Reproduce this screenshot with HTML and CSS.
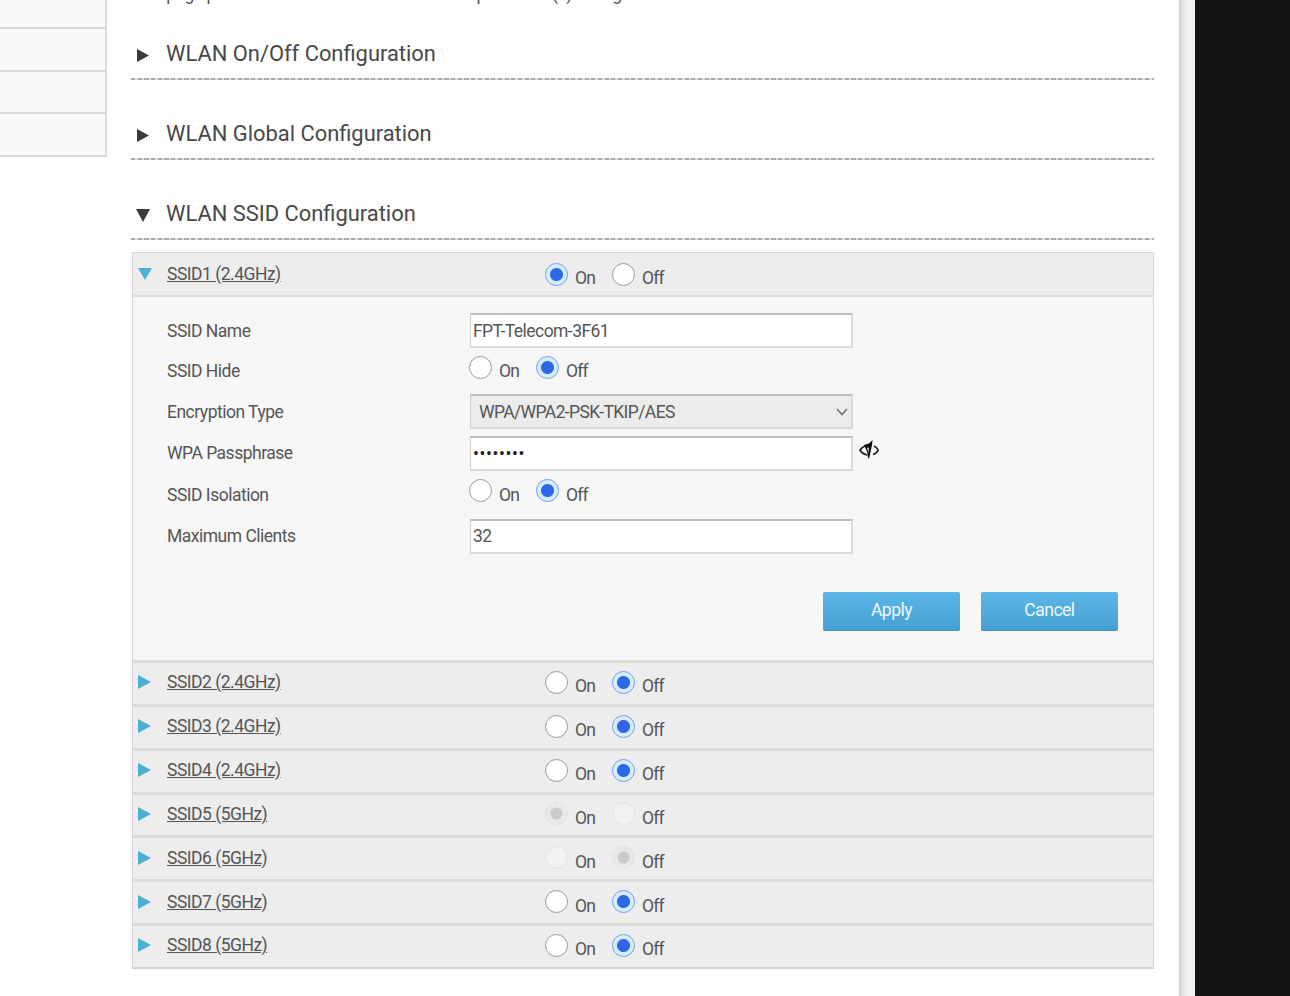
FILE: index.html
```html
<!DOCTYPE html>
<html lang="en">
<head>
    <meta charset="UTF-8">
    <meta name="viewport" content="width=device-width, initial-scale=1.0">
    <title>WLAN Basic</title>
    <link rel="stylesheet" href="styles.css">
</head>
<body>
    <div class="page">
        <!-- Side menu -->
        <ul class="side-menu">
            <li></li>
            <li></li>
            <li></li>
            <li></li>
        </ul>

        <div class="content">
            <p class="intro">This page provides the function of WLAN basic parameter(s) configuration.</p>

            <h2 class="section"><svg class="arrow" viewBox="0 0 14 14"><path d="M1 1L13 7.5L1 14Z"/></svg>WLAN On/Off Configuration</h2>
            <h2 class="section"><svg class="arrow" viewBox="0 0 14 14"><path d="M1 1L13 7.5L1 14Z"/></svg>WLAN Global Configuration</h2>
            <h2 class="section"><svg class="arrow" viewBox="0 0 14 14"><path d="M0 1H14L7 14Z"/></svg>WLAN SSID Configuration</h2>

            <div class="ssid-list">
                <div class="ssid-row first">
                    <svg class="arrow" viewBox="0 0 14 14"><path d="M0 1H14L7 13Z"/></svg>
                    <a class="ssid-link">SSID1 (2.4GHz)</a>
                    <div class="switch">
                        <label><input type="radio" name="ssid1" checked><span>On</span></label>
                        <label><input type="radio" name="ssid1"><span>Off</span></label>
                    </div>
                </div>

                <!-- SSID1 settings -->
                <form class="ssid-form">
                    <div class="fields">
                        <label for="ssid-name">SSID Name</label>
                        <input class="field" type="text" id="ssid-name" value="FPT-Telecom-3F61">

                        <span>SSID Hide</span>
                        <div class="switch">
                            <label><input type="radio" name="hide"><span>On</span></label>
                            <label><input type="radio" name="hide" checked><span>Off</span></label>
                        </div>

                        <label for="encryption">Encryption Type</label>
                        <div class="select-box">
                            <select class="field" id="encryption">
                                <option>WPA/WPA2-PSK-TKIP/AES</option>
                            </select>
                            <svg class="chevron" viewBox="0 0 14 10"><path d="M2 2L7 7.5L12 2"/></svg>
                        </div>

                        <label for="passphrase">WPA Passphrase</label>
                        <div class="pass-box">
                            <input class="field pass" type="text" id="passphrase" value="••••••••">
                            <svg class="eye" viewBox="0 0 20 20">
                                <path class="line" d="M7 5.5C4 6.5 2 8.5 1 10C2 12 4.500 14 8 15M15 6C17 7 18.500 8.500 19 10C18.500 12 17 13.500 14 14.500"/>
                                <path d="M5 5L10 3.500L13.500 0L13 5L10 19L8.500 16L8.500 13L6 7Z"/>
                                <path class="shine" d="M8 8L10 7.500L9.500 13Z"/>
                            </svg>
                        </div>

                        <span>SSID Isolation</span>
                        <div class="switch">
                            <label><input type="radio" name="isolation"><span>On</span></label>
                            <label><input type="radio" name="isolation" checked><span>Off</span></label>
                        </div>

                        <label for="clients">Maximum Clients</label>
                        <input class="field" type="text" id="clients" value="32">
                    </div>
                    <div class="buttons">
                        <button type="button">Apply</button>
                        <button type="button">Cancel</button>
                    </div>
                </form>

                <div class="ssid-row">
                    <svg class="arrow" viewBox="0 0 14 14"><path d="M0 0L13 7L0 14Z"/></svg>
                    <a class="ssid-link">SSID2 (2.4GHz)</a>
                    <div class="switch">
                        <label><input type="radio" name="ssid2"><span>On</span></label>
                        <label><input type="radio" name="ssid2" checked><span>Off</span></label>
                    </div>
                </div>
                <div class="ssid-row">
                    <svg class="arrow" viewBox="0 0 14 14"><path d="M0 0L13 7L0 14Z"/></svg>
                    <a class="ssid-link">SSID3 (2.4GHz)</a>
                    <div class="switch">
                        <label><input type="radio" name="ssid3"><span>On</span></label>
                        <label><input type="radio" name="ssid3" checked><span>Off</span></label>
                    </div>
                </div>
                <div class="ssid-row">
                    <svg class="arrow" viewBox="0 0 14 14"><path d="M0 0L13 7L0 14Z"/></svg>
                    <a class="ssid-link">SSID4 (2.4GHz)</a>
                    <div class="switch">
                        <label><input type="radio" name="ssid4"><span>On</span></label>
                        <label><input type="radio" name="ssid4" checked><span>Off</span></label>
                    </div>
                </div>
                <div class="ssid-row">
                    <svg class="arrow" viewBox="0 0 14 14"><path d="M0 0L13 7L0 14Z"/></svg>
                    <a class="ssid-link">SSID5 (5GHz)</a>
                    <div class="switch">
                        <label><input type="radio" name="ssid5" checked disabled><span>On</span></label>
                        <label><input type="radio" name="ssid5" disabled><span>Off</span></label>
                    </div>
                </div>
                <div class="ssid-row">
                    <svg class="arrow" viewBox="0 0 14 14"><path d="M0 0L13 7L0 14Z"/></svg>
                    <a class="ssid-link">SSID6 (5GHz)</a>
                    <div class="switch">
                        <label><input type="radio" name="ssid6" disabled><span>On</span></label>
                        <label><input type="radio" name="ssid6" checked disabled><span>Off</span></label>
                    </div>
                </div>
                <div class="ssid-row">
                    <svg class="arrow" viewBox="0 0 14 14"><path d="M0 0L13 7L0 14Z"/></svg>
                    <a class="ssid-link">SSID7 (5GHz)</a>
                    <div class="switch">
                        <label><input type="radio" name="ssid7"><span>On</span></label>
                        <label><input type="radio" name="ssid7" checked><span>Off</span></label>
                    </div>
                </div>
                <div class="ssid-row">
                    <svg class="arrow" viewBox="0 0 14 14"><path d="M0 0L13 7L0 14Z"/></svg>
                    <a class="ssid-link">SSID8 (5GHz)</a>
                    <div class="switch">
                        <label><input type="radio" name="ssid8"><span>On</span></label>
                        <label><input type="radio" name="ssid8" checked><span>Off</span></label>
                    </div>
                </div>
            </div>
        </div>
        <div class="page-edge"></div>
    </div>
</body>
</html>
```
FILE: styles.css
```css
* {
    box-sizing: border-box;
}

body {
    margin: 0;
    height: 996px;
    overflow: hidden;
    background: #141414;
    font-family: Roboto, sans-serif;
    font-size: 17.5px;
    letter-spacing: -0.5px;
    color: #555;
}

.page {
    display: flex;
    width: 1195px;
    height: 996px;
    overflow: hidden;
    background: #fefefe;
}

.side-menu {
    width: 107px;
    margin: 0;
    padding: 0;
    list-style: none;
}

.side-menu li {
    height: 42.7px;
    background: #fafafa;
    border-right: 2px solid #dcdcdc;
    border-bottom: 2px solid #d8d8d8;
}

.side-menu li:first-child {
    height: 29px;
}

.content {
    width: 1023px;
    margin-left: 24px;
}

.intro {
    height: 16px;
    margin: -16px 0 0;
    line-height: 20px;
    white-space: nowrap;
}

.section {
    display: flex;
    align-items: center;
    height: 80px;
    margin: 0;
    padding: 27px 0 0 5px;
    background: repeating-linear-gradient(to right, #aaa 0 4.2px, #dedede 4.2px 6.67px) bottom / 100% 2px no-repeat;
    font-size: 21.9px;
    font-weight: 400;
    letter-spacing: 0;
    color: #484848;
}

.arrow {
    flex: none;
    width: 14px;
    height: 14px;
}

.section .arrow {
    margin: 3px 16px 0 0;
    fill: #3c3c3c;
}

.ssid-list {
    margin: 12px 0 0 1px;
    border: 1px solid #d6d6d6;
    border-bottom: 2px solid #d2d2d2;
}

.ssid-row {
    display: flex;
    align-items: center;
    height: 43.85px;
    padding: 0 0 2px 5px;
    border-top: 3px solid #dbdbdb;
    background: #ededed;
}

.ssid-row.first {
    height: 44px;
    padding-bottom: 0;
    border-top: 0;
    border-bottom: 2px solid #dcdcdc;
}

.ssid-row .arrow {
    margin-right: 15px;
    fill: #4dafd7;
}

.ssid-link {
    width: 378px;
    text-decoration: underline;
}

.switch,
.switch label {
    display: flex;
    align-items: center;
}

.switch label {
    width: 67px;
}

.switch span {
    margin: 8px 0 0 7px;
    letter-spacing: -0.8px;
}

input[type="radio"] {
    appearance: none;
    flex: none;
    width: 23px;
    height: 23px;
    margin: 0;
    border: 1.5px solid #999;
    border-radius: 50%;
    background: #fff;
}

input[type="radio"]:checked {
    border-color: #6a9ff0;
    background: radial-gradient(circle, #2c67e5 6px, #d9ecff 7px);
}

input[type="radio"]:disabled {
    border-color: #e2e2e2;
    background: #f2f2f2;
}

input[type="radio"]:disabled:checked {
    background: radial-gradient(circle, #cacaca 5.5px, #e8e8e8 6.5px);
}

/* Settings form */
.ssid-form {
    height: 363px;
    padding: 13px 35px 0 34px;
    background: #f7f7f7;
}

.fields {
    display: grid;
    grid-template-columns: 303px 1fr;
    grid-template-rows: 41px 40px 41px 42px 41px 42px;
    align-items: center;
}

.fields .switch {
    margin: -8px 0 0 -1px;
}

.field {
    width: 383px;
    height: 35px;
    padding: 0 2px;
    border: 2px solid #dadada;
    border-top-color: #bdbdbd;
    border-left: 1px solid #cfcfcf;
    background: #fff;
    font: inherit;
    letter-spacing: -0.55px;
    color: #555;
}

.select-box {
    position: relative;
    width: 383px;
}

select.field {
    display: block;
    appearance: none;
    padding: 0 8px;
    border-radius: 0;
    background: #ececec;
    letter-spacing: -0.6px;
}

.chevron {
    position: absolute;
    right: 4px;
    top: 13px;
    width: 14px;
    height: 10px;
    fill: none;
    stroke: #777;
    stroke-width: 1.7;
}

.pass-box {
    display: flex;
}

.pass {
    padding-top: 2px;
    letter-spacing: 0.6px;
    color: #222;
}

.eye {
    width: 20px;
    height: 20px;
    margin: 4px 0 0 6px;
    fill: #0a0a0a;
}

.eye .line {
    fill: none;
    stroke: #222;
    stroke-width: 1.8;
}

.eye .shine {
    fill: #ddd;
}

.buttons {
    display: flex;
    justify-content: flex-end;
    gap: 21px;
    margin-top: 35px;
}

button {
    width: 137px;
    height: 39px;
    padding: 0 0 3px;
    border: 0;
    border-bottom: 1px solid #3f8dbb;
    border-radius: 2px;
    background: linear-gradient(#5cb6e8, #459fd2);
    font: inherit;
    letter-spacing: inherit;
    color: #f2faff;
}

.page-edge {
    width: 16px;
    margin-left: auto;
    background: linear-gradient(to right, #cfcfcf, #e4e4e4 4px, #f1f1f1 8px, #f3f3f3);
}
```
